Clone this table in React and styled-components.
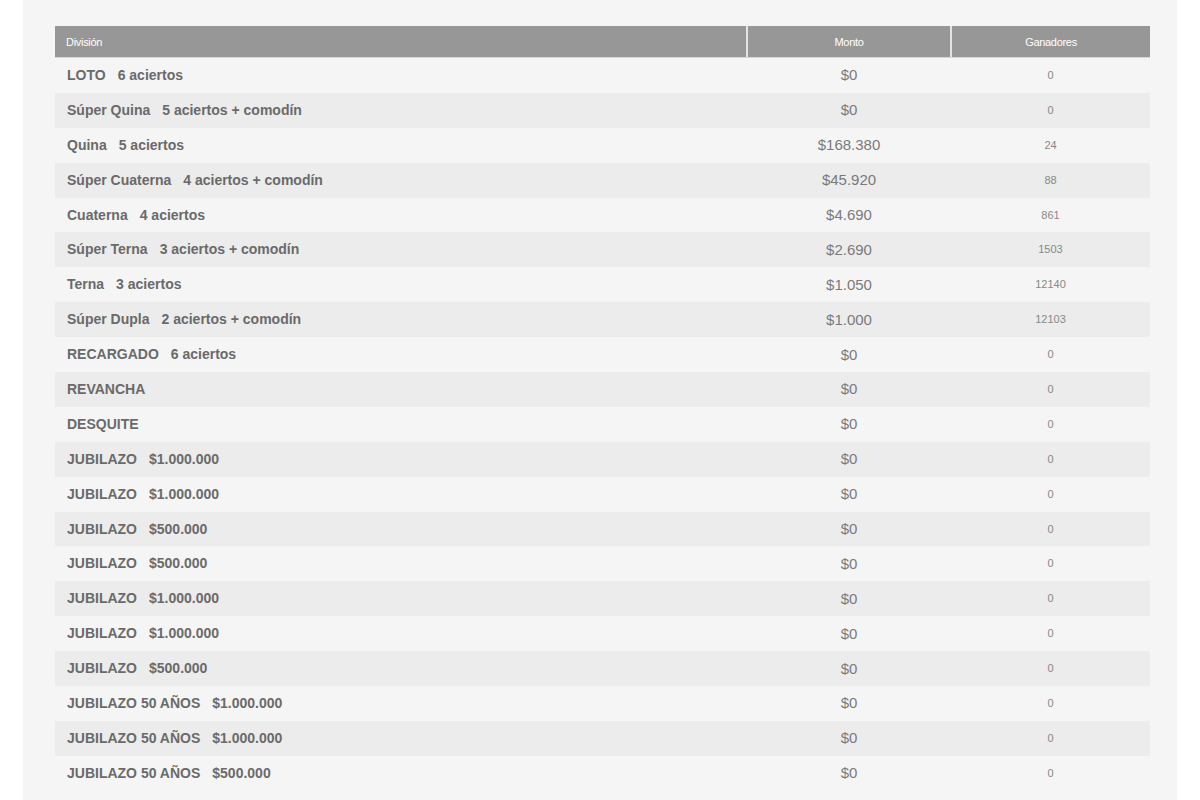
import styled, { createGlobalStyle } from "styled-components";

const GlobalStyle = createGlobalStyle`
  html, body {
    margin: 0;
    padding: 0;
    background: #ffffff;
    font-family: "Liberation Sans", Arial, sans-serif;
  }
`;

const rows = [
  { name: "LOTO", detail: "6 aciertos", monto: "$0", ganadores: "0" },
  { name: "Súper Quina", detail: "5 aciertos + comodín", monto: "$0", ganadores: "0" },
  { name: "Quina", detail: "5 aciertos", monto: "$168.380", ganadores: "24" },
  { name: "Súper Cuaterna", detail: "4 aciertos + comodín", monto: "$45.920", ganadores: "88" },
  { name: "Cuaterna", detail: "4 aciertos", monto: "$4.690", ganadores: "861" },
  { name: "Súper Terna", detail: "3 aciertos + comodín", monto: "$2.690", ganadores: "1503" },
  { name: "Terna", detail: "3 aciertos", monto: "$1.050", ganadores: "12140" },
  { name: "Súper Dupla", detail: "2 aciertos + comodín", monto: "$1.000", ganadores: "12103" },
  { name: "RECARGADO", detail: "6 aciertos", monto: "$0", ganadores: "0" },
  { name: "REVANCHA", detail: "", monto: "$0", ganadores: "0" },
  { name: "DESQUITE", detail: "", monto: "$0", ganadores: "0" },
  { name: "JUBILAZO", detail: "$1.000.000", monto: "$0", ganadores: "0" },
  { name: "JUBILAZO", detail: "$1.000.000", monto: "$0", ganadores: "0" },
  { name: "JUBILAZO", detail: "$500.000", monto: "$0", ganadores: "0" },
  { name: "JUBILAZO", detail: "$500.000", monto: "$0", ganadores: "0" },
  { name: "JUBILAZO", detail: "$1.000.000", monto: "$0", ganadores: "0" },
  { name: "JUBILAZO", detail: "$1.000.000", monto: "$0", ganadores: "0" },
  { name: "JUBILAZO", detail: "$500.000", monto: "$0", ganadores: "0" },
  { name: "JUBILAZO 50 AÑOS", detail: "$1.000.000", monto: "$0", ganadores: "0" },
  { name: "JUBILAZO 50 AÑOS", detail: "$1.000.000", monto: "$0", ganadores: "0" },
  { name: "JUBILAZO 50 AÑOS", detail: "$500.000", monto: "$0", ganadores: "0" },
];

const App = () => {
  return (
    <>
      <GlobalStyle />
      <Page>
        <Panel>
          <Table>
            <HeaderRow>
              <HeadCell $align="left">División</HeadCell>
              <HeadCell>Monto</HeadCell>
              <HeadCell>Ganadores</HeadCell>
            </HeaderRow>
            {rows.map((r, i) => (
              <Row key={i} $striped={i % 2 === 1}>
                <DivisionCell>
                  <span>{r.name}</span>
                  {r.detail && <Detail>{r.detail}</Detail>}
                </DivisionCell>
                <MontoCell>{r.monto}</MontoCell>
                <WinnersCell>{r.ganadores}</WinnersCell>
              </Row>
            ))}
          </Table>
        </Panel>
      </Page>
    </>
  );
};

const Page = styled.div`
  width: 1200px;
  height: 800px;
  padding: 0 23px;
  box-sizing: border-box;
  overflow: hidden;
`;

const Panel = styled.div`
  background: #f5f5f5;
  height: 100%;
  padding: 26px 27px 0 32px;
  box-sizing: border-box;
`;

const Table = styled.div`
  display: flex;
  flex-direction: column;
`;

const HeaderRow = styled.div`
  display: grid;
  grid-template-columns: 691px 204px 1fr;
  height: 32px;
  background: #979797;
  border-bottom: 1px solid #d6d6d6;
  box-sizing: border-box;
`;

const HeadCell = styled.div`
  display: flex;
  align-items: center;
  justify-content: ${({ $align }) => ($align === "left" ? "flex-start" : "center")};
  padding-left: ${({ $align }) => ($align === "left" ? "11px" : "0")};
  color: #ffffff;
  font-size: 11px;
  letter-spacing: -0.3px;
  & + & {
    border-left: 2px solid #e4e4e4;
  }
`;

const Row = styled.div`
  display: grid;
  grid-template-columns: 692px 204px 1fr;
  height: 34.9px;
  align-items: center;
  background: ${({ $striped }) => ($striped ? "#ececec" : "#f5f5f5")};
`;

const DivisionCell = styled.div`
  display: flex;
  align-items: center;
  padding-left: 12px;
  font-size: 14px;
  font-weight: bold;
  color: #6a6a6a;
  margin-top: -1px;
`;

const Detail = styled.span`
  margin-left: 12px;
`;

const MontoCell = styled.div`
  text-align: center;
  font-size: 15px;
  color: #7a7a7a;
  margin-top: -1px;
`;

const WinnersCell = styled.div`
  text-align: center;
  font-size: 11px;
  color: #888888;
  margin-top: -1px;
`;

export default App;
